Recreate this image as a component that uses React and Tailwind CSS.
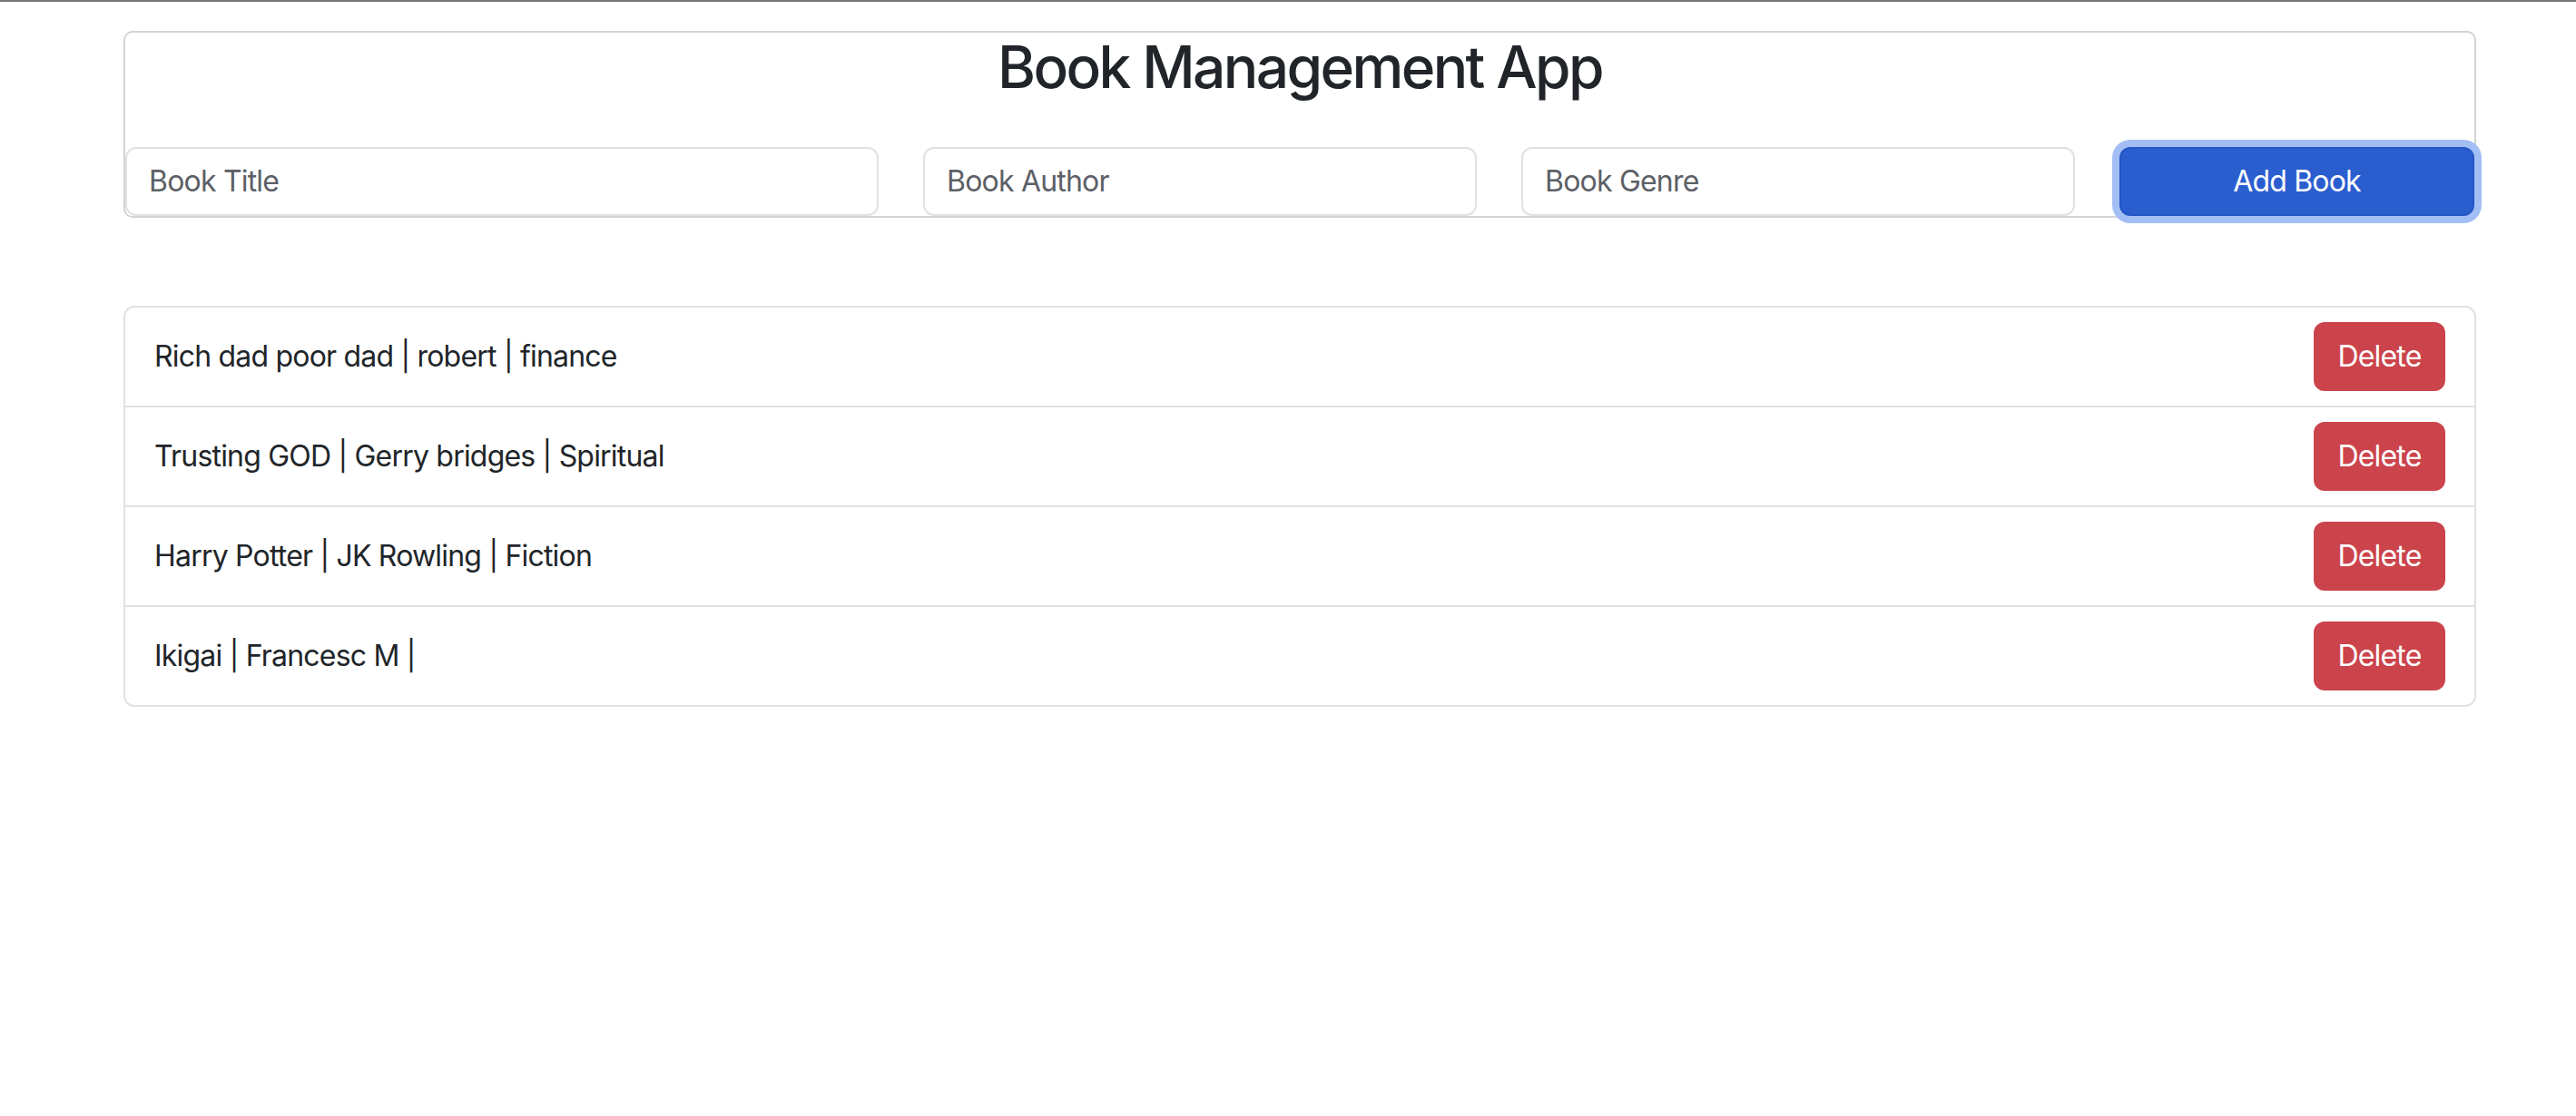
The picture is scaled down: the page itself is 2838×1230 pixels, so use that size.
import React from "react";

const books = [
  "Rich dad poor dad | robert | finance",
  "Trusting GOD | Gerry bridges | Spiritual",
  "Harry Potter | JK Rowling | Fiction",
  "Ikigai | Francesc M |",
];

export default function App() {
  const font = { fontFamily: "Inter, 'Liberation Sans', sans-serif" };
  return (
    <div className="min-h-[1230px] w-full bg-white text-[#212529] tracking-[-0.8px]" style={font}>
      <div className="h-[2px] w-full bg-[#7b7778]" />
      <div className="ml-[136px] w-[2592px] pt-[32px]">
        <div className="rounded-[10px] border-2 border-[#d3d3d3]">
          <h2 className="text-center text-[64px] font-medium leading-[1.2] tracking-[-2.6px] text-[#212529]">
            Book Management App
          </h2>
          <div className="mt-[49px] flex gap-[49px]">
            <input
              className="h-[76px] w-[830px] rounded-[12px] border-2 border-[#dee2e6] bg-white px-[24px] text-[32px] tracking-[-0.8px] text-[#212529] outline-none placeholder:text-[#5c6066]"
              placeholder="Book Title"
              style={font}
            />
            <input
              className="h-[76px] w-[610px] rounded-[12px] border-2 border-[#dee2e6] bg-white px-[24px] text-[32px] tracking-[-0.8px] text-[#212529] outline-none placeholder:text-[#5c6066]"
              placeholder="Book Author"
              style={font}
            />
            <input
              className="h-[76px] w-[610px] rounded-[12px] border-2 border-[#dee2e6] bg-white px-[24px] text-[32px] tracking-[-0.8px] text-[#212529] outline-none placeholder:text-[#5c6066]"
              placeholder="Book Genre"
              style={font}
            />
            <button
              className="h-[76px] w-[391px] rounded-[12px] border-2 border-[#2455c4] bg-[#2a5ecf] text-[32px] tracking-[-0.8px] text-white ring-8 ring-[#a3bef5]"
              style={font}
            >
              Add Book
            </button>
          </div>
        </div>

        <div className="mt-[97px] rounded-[12px] border-2 border-[#dee2e6]">
          {books.map((b, i) => (
            <div
              key={i}
              className={
                "flex items-center justify-between px-[32px] py-[16px] " +
                (i < books.length - 1 ? "border-b-2 border-[#dee2e6]" : "")
              }
            >
              <span className="text-[32px] leading-[1.5] text-[#212529]">{b}</span>
              <button className="h-[76px] w-[145px] rounded-[12px] bg-[#cb444b] text-[32px] tracking-[-0.8px] text-white">
                Delete
              </button>
            </div>
          ))}
        </div>
      </div>
    </div>
  );
}
